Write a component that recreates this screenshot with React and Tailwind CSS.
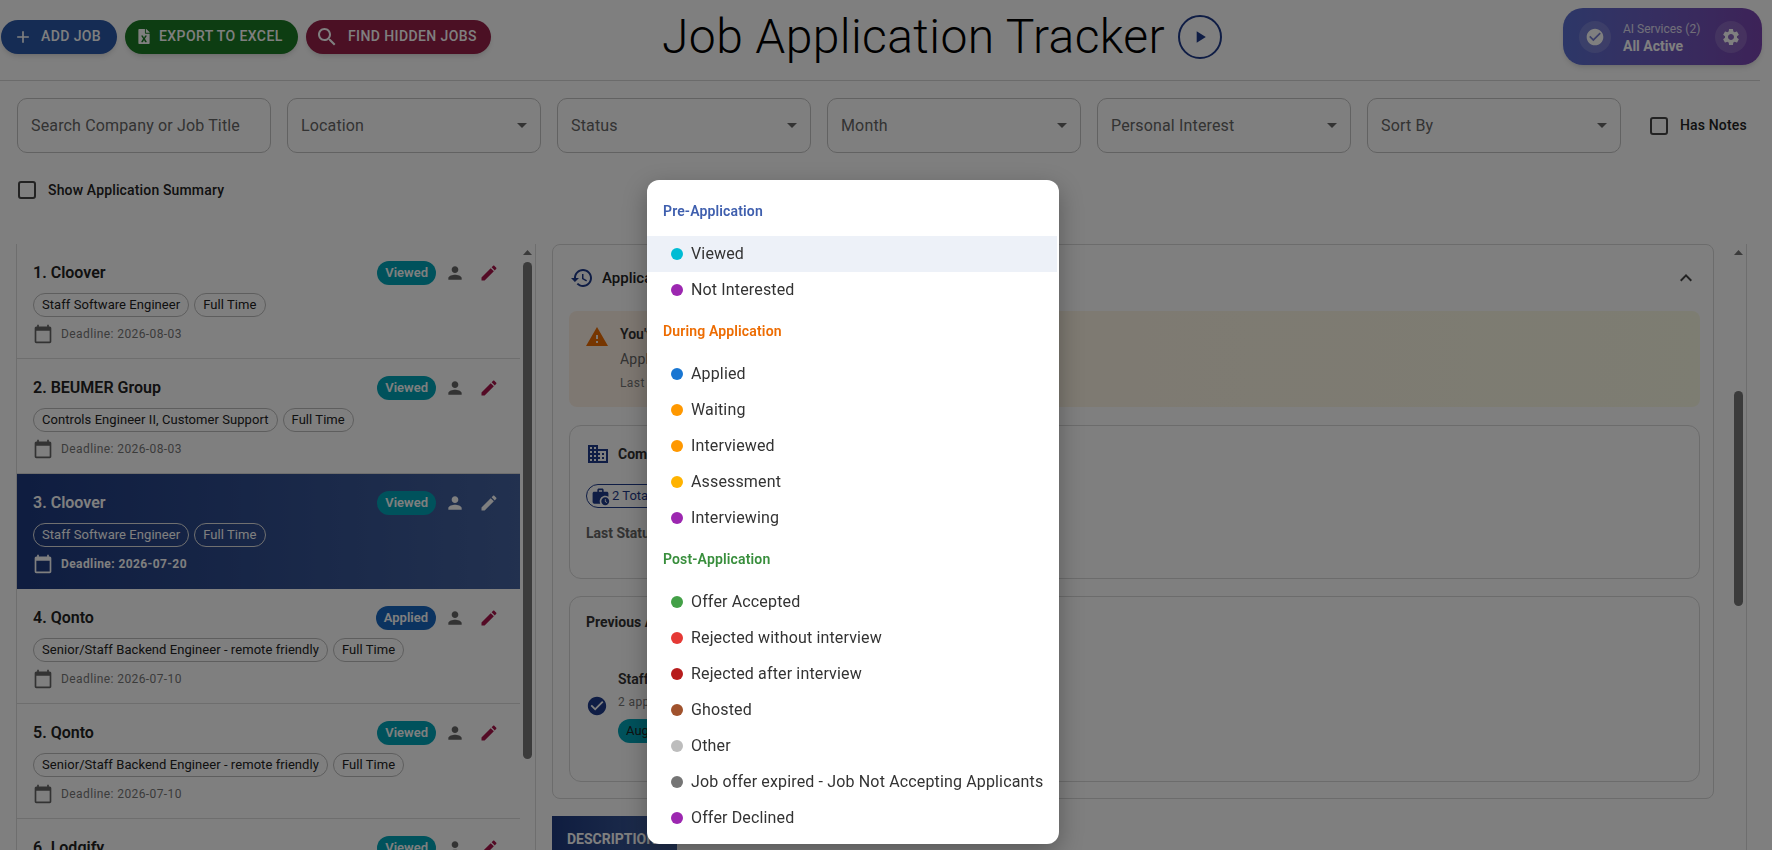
import React from "react";
import { FaFileExcel } from "react-icons/fa";

const P = {
  person: "M12 12c2.21 0 4-1.79 4-4s-1.79-4-4-4-4 1.79-4 4 1.79 4 4 4zm0 2c-2.67 0-8 1.34-8 4v2h16v-2c0-2.66-5.33-4-8-4z",
  edit: "M3 17.25V21h3.75L17.81 9.94l-3.75-3.75L3 17.25zM20.71 7.04c.39-.39.39-1.02 0-1.41l-2.34-2.34c-.39-.39-1.02-.39-1.41 0l-1.83 1.83 3.75 3.75 1.83-1.83z",
  cal: "M20 3h-1V1h-2v2H7V1H5v2H4c-1.1 0-2 .9-2 2v16c0 1.1.9 2 2 2h16c1.1 0 2-.9 2-2V5c0-1.1-.9-2-2-2zm0 18H4V8h16v13z",
  add: "M19 13h-6v6h-2v-6H5v-2h6V5h2v6h6v2z",
  search: "M15.5 14h-.79l-.28-.27C15.41 12.59 16 11.11 16 9.5 16 5.91 13.09 3 9.5 3S3 5.91 3 9.5 5.91 16 9.5 16c1.61 0 3.09-.59 4.23-1.57l.27.28v.79l5 4.99L20.49 19l-4.99-5zm-6 0C7.01 14 5 11.99 5 9.5S7.01 5 9.5 5 14 7.01 14 9.5 11.99 14 9.5 14z",
  check: "M12 2C6.48 2 2 6.48 2 12s4.48 10 10 10 10-4.48 10-10S17.52 2 12 2zm-2 15l-5-5 1.41-1.41L10 14.17l7.59-7.59L19 8l-9 9z",
  gear: "M19.14 12.94c.04-.3.06-.61.06-.94 0-.32-.02-.64-.07-.94l2.03-1.58c.18-.14.23-.41.12-.61l-1.92-3.32c-.12-.22-.37-.29-.59-.22l-2.39.96c-.5-.38-1.03-.7-1.62-.94l-.36-2.54c-.04-.24-.24-.41-.48-.41h-3.84c-.24 0-.43.17-.47.41l-.36 2.54c-.59.24-1.13.57-1.62.94l-2.39-.96c-.22-.08-.47 0-.59.22L2.74 8.87c-.12.21-.08.47.12.61l2.03 1.58c-.05.3-.09.63-.09.94s.02.64.07.94l-2.03 1.58c-.18.14-.23.41-.12.61l1.92 3.32c.12.22.37.29.59.22l2.39-.96c.5.38 1.03.7 1.62.94l.36 2.54c.05.24.24.41.48.41h3.84c.24 0 .44-.17.47-.41l.36-2.54c.59-.24 1.13-.56 1.62-.94l2.39.96c.22.08.47 0 .59-.22l1.92-3.32c.12-.22.07-.47-.12-.61l-2.01-1.58zM12 15.6c-1.98 0-3.6-1.62-3.6-3.6s1.62-3.6 3.6-3.6 3.6 1.62 3.6 3.6-1.62 3.6-3.6 3.6z",
  history: "M13 3c-4.97 0-9 4.03-9 9H1l3.89 3.89.07.14L9 12H6c0-3.87 3.13-7 7-7s7 3.13 7 7-3.13 7-7 7c-1.93 0-3.68-.79-4.94-2.06l-1.42 1.42C8.27 19.99 10.51 21 13 21c4.97 0 9-4.03 9-9s-4.03-9-9-9zm-1 5v5l4.28 2.54.72-1.21-3.5-2.08V8H12z",
  warn: "M1 21h22L12 2 1 21zm12-3h-2v-2h2v2zm0-4h-2v-4h2v4z",
  domain: "M12 7V3H2v18h20V7H10zM6 19H4v-2h2v2zm0-4H4v-2h2v2zm0-4H4V9h2v2zm0-4H4V5h2v2zm4 12H8v-2h2v2zm0-4H8v-2h2v2zm0-4H8V9h2v2zm0-4H8V5h2v2zm10 12h-8v-2h2v-2h-2v-2h2v-2h-2V9h8v10zm-2-8h-2v2h2v-2zm0 4h-2v2h2v-2z",
  work: "M18 11c1.49 0 2.87.47 4 1.26V8c0-1.11-.89-2-2-2h-4V4c0-1.11-.89-2-2-2h-4c-1.11 0-2 .89-2 2v2H4c-1.11 0-1.99.89-1.99 2L2 19c0 1.11.89 2 2 2h7.68c-.43-.91-.68-1.92-.68-3 0-3.87 3.13-7 7-7zm-8-7h4v2h-4V4zM18 13c-2.76 0-5 2.24-5 5s2.24 5 5 5 5-2.24 5-5-2.24-5-5-5zm1.65 7.35L17.5 18.2V15h1v2.79l1.85 1.85-.7.71z",
  less: "M12 8l-6 6 1.41 1.41L12 10.83l4.59 4.58L18 14z",
  play: "M8 5v14l11-7z",
};

function Icon({ d, className }) {
  return (
    <svg viewBox="0 0 24 24" className={className} fill="currentColor" aria-hidden="true">
      <path d={d} />
    </svg>
  );
}

function Field({ label, arrow = true }) {
  return (
    <div className="w-[254px] h-[55px] shrink-0 border border-[#c4c4c4] rounded-[10px] px-[13px] flex items-center justify-between text-[#666] text-[16px] tracking-[0.15px]">
      <span>{label}</span>
      {arrow && (
        <svg viewBox="0 0 10 5" className="w-[10px] h-[5px] text-[#666]" fill="currentColor" aria-hidden="true">
          <path d="M0 0l5 5 5-5z" />
        </svg>
      )}
    </div>
  );
}

function Box() {
  return <span className="w-[18px] h-[18px] shrink-0 border-2 border-[#444] rounded-[3px]" />;
}

function Scroll({ gap, thumb }) {
  return (
    <div className="w-4 shrink-0 flex flex-col items-center pt-[6px] border-r border-[#dcdcdc]">
      <svg viewBox="0 0 9 5" className="w-[9px] h-[5px] text-[#777]" fill="currentColor" aria-hidden="true">
        <path d="M0 5l4.5-5 4.5 5z" />
      </svg>
      <div className={`w-[9px] rounded-[5px] bg-[#777] ${gap} ${thumb}`} />
    </div>
  );
}

const jobs = [
  { n: "1. Cloover", s: "Viewed", t: "Staff Software Engineer", d: "2026-08-03" },
  { n: "2. BEUMER Group", s: "Viewed", t: "Controls Engineer II, Customer Support", d: "2026-08-03" },
  { n: "3. Cloover", s: "Viewed", t: "Staff Software Engineer", d: "2026-07-20", sel: true },
  { n: "4. Qonto", s: "Applied", t: "Senior/Staff Backend Engineer - remote friendly", d: "2026-07-10" },
  { n: "5. Qonto", s: "Viewed", t: "Senior/Staff Backend Engineer - remote friendly", d: "2026-07-10" },
  { n: "6. Lodgify", s: "Viewed", t: "Senior Software Engineer", d: "2026-07-10" },
];

function JobRow({ job }) {
  const sel = job.sel;
  const chip = `h-6 px-2 rounded-full border flex items-center text-[13px] tracking-[0.06px] ${sel ? "border-[#e0e0e0] text-white" : "border-[#bdbdbd] text-[#222]"}`;
  return (
    <div className={`h-[115px] shrink-0 pl-4 pr-[16px] pt-[17px] ${sel ? "bg-gradient-to-r from-[#1e3a80] to-[#44629f]" : "border-b border-[#dcdcdc]"}`}>
      <div className="flex items-center h-6">
        <span className={`flex-1 text-[16px] font-semibold ${sel ? "text-white" : "text-[#222]"}`}>{job.n}</span>
        <span className={`h-6 px-2 rounded-full flex items-center text-[13px] font-semibold text-white ${job.s === "Viewed" ? "bg-[#00a5b8]" : "bg-[#1767c0]"}`}>{job.s}</span>
        <span className="w-[38px] flex justify-center">
          <Icon d={P.person} className={`w-5 h-5 ${sel ? "text-white" : "text-[#666]"}`} />
        </span>
        <span className="w-[30px] flex justify-center">
          <Icon d={P.edit} className={`w-5 h-5 ${sel ? "text-white" : "text-[#a8144a]"}`} />
        </span>
      </div>
      <div className="flex gap-[5px] mt-[8px]">
        <span className={chip}>{job.t}</span>
        <span className={chip}>Full Time</span>
      </div>
      <div className="flex items-center mt-[6px] h-[22px]">
        <Icon d={P.cal} className={`w-5 h-5 ${sel ? "text-white" : "text-[#666]"}`} />
        <span className={`ml-[8px] text-[12px] tracking-[0.4px] ${sel ? "text-white font-bold" : "text-[#777]"}`}>Deadline: {job.d}</span>
      </div>
    </div>
  );
}

const groups = [
  { h: "Pre-Application", c: "text-[#3f5fae]", items: [["Viewed", "bg-[#00bcd4]"], ["Not Interested", "bg-[#9c27b0]"]] },
  { h: "During Application", c: "text-[#ed6c02]", items: [["Applied", "bg-[#1976d2]"], ["Waiting", "bg-[#ff9800]"], ["Interviewed", "bg-[#ff9800]"], ["Assessment", "bg-[#ffb300]"], ["Interviewing", "bg-[#9c27b0]"]] },
  { h: "Post-Application", c: "text-[#388e3c]", items: [["Offer Accepted", "bg-[#43a047]"], ["Rejected without interview", "bg-[#e53935]"], ["Rejected after interview", "bg-[#b71c1c]"], ["Ghosted", "bg-[#a0522d]"], ["Other", "bg-[#bdbdbd]"], ["Job offer expired - Job Not Accepting Applicants", "bg-[#757575]"], ["Offer Declined", "bg-[#9c27b0]"]] },
];

function Menu() {
  return (
    <div className="fixed left-[647px] top-[180px] w-[412px] z-20 bg-white rounded-[12px] py-2 shadow-[0_8px_24px_rgba(0,0,0,0.3)] overflow-hidden">
      {groups.map((g) => (
        <div key={g.h}>
          <div className={`h-12 pl-4 pb-[2px] flex items-center text-[14px] tracking-[0.15px] font-semibold ${g.c}`}>{g.h}</div>
          {g.items.map(([t, c]) => (
            <div key={t} className={`h-9 mr-[2px] pl-6 flex items-center text-[16px] tracking-[0.15px] text-[#333] ${t === "Viewed" ? "bg-[#edf1f8]" : ""}`}>
              <span className={`w-3 h-3 rounded-full mr-2 ${c}`} />
              {t}
            </div>
          ))}
        </div>
      ))}
    </div>
  );
}

export default function App() {
  return (
    <div className="relative h-screen w-full overflow-hidden bg-white flex flex-col font-['Roboto',sans-serif]">
      <header className="h-[81px] shrink-0 mr-[12px] border-b border-[#d6d6d6] flex items-center pl-px pb-[7px]">
        <div className="flex gap-2">
          <button className="h-[34px] w-[116px] rounded-full bg-[#2a58a8] text-white text-[14px] font-medium tracking-[0.4px] flex items-center pl-[12px] gap-[8px] shadow-md">
            <Icon d={P.add} className="w-5 h-5" />ADD JOB
          </button>
          <button className="h-[34px] w-[173px] rounded-full bg-[#1b7a24] text-white text-[14px] font-medium tracking-[0.4px] flex items-center pl-[13px] gap-[9px] shadow-md">
            <FaFileExcel className="w-[12px] h-[15px]" />EXPORT TO EXCEL
          </button>
          <button className="h-[34px] w-[185px] rounded-full bg-[#962048] text-white text-[14px] font-medium tracking-[0.4px] flex items-center pl-[9px] gap-[9px] shadow-md">
            <Icon d={P.search} className="w-6 h-6" />FIND HIDDEN JOBS
          </button>
        </div>
        <div className="ml-[171px] flex items-center gap-[13px]">
          <h1 className="text-[48px] leading-none font-light tracking-[0.4px] text-black whitespace-nowrap">Job Application Tracker</h1>
          <span className="w-[44px] h-[44px] rounded-full border-2 border-[#1e3a8a] flex items-center justify-center text-[#1e3a8a]">
            <Icon d={P.play} className="w-5 h-5" />
          </span>
        </div>
        <div className="ml-auto -mr-[2px] w-[199px] h-[57px] rounded-[20px] bg-gradient-to-r from-[#5a6fd0] to-[#7a45b0] flex items-center pl-4 pr-[15px] shadow-md">
          <span className="w-8 h-8 rounded-full bg-white/15 flex items-center justify-center">
            <Icon d={P.check} className="w-5 h-5 text-white" />
          </span>
          <div className="ml-3 flex-1 text-white pt-[4px]">
            <div className="text-[12px] leading-[16px] opacity-80">AI Services (2)</div>
            <div className="text-[14px] leading-[19px] font-bold">All Active</div>
          </div>
          <span className="w-8 h-8 rounded-full bg-white/15 flex items-center justify-center">
            <Icon d={P.gear} className="w-5 h-5 text-white" />
          </span>
        </div>
      </header>

      <div className="flex items-center gap-4 pl-[17px] mt-[17px] shrink-0">
        <Field label="Search Company or Job Title" arrow={false} />
        <Field label="Location" />
        <Field label="Status" />
        <Field label="Month" />
        <Field label="Personal Interest" />
        <Field label="Sort By" />
        <div className="flex items-center ml-[13px] gap-3">
          <Box />
          <span className="text-[14px] font-medium tracking-[0.15px] text-[#222]">Has Notes</span>
        </div>
      </div>

      <div className="flex items-center gap-3 pl-[18px] mt-[28px] h-[18px] shrink-0">
        <Box />
        <span className="text-[14px] font-medium tracking-[0.15px] text-[#222]">Show Application Summary</span>
      </div>

      <main className="flex flex-1 min-h-0 mt-[45px] pl-[16px] pr-[25px]">
        <div className="flex shrink-0">
          <div className="w-[504px] border-l border-[#dcdcdc] flex flex-col overflow-hidden">
            {jobs.map((j) => (
              <JobRow key={j.n} job={j} />
            ))}
          </div>
          <Scroll gap="mt-[7px]" thumb="h-[497px]" />
        </div>

        <div className="ml-4 flex-1 min-w-0 flex overflow-hidden">
          <div className="flex-1 min-w-0">
            <section className="h-[555px] border border-[#d8d8d8] rounded-[8px] pl-4 pr-[13px]">
              <div className="h-[66px] flex items-center">
                <Icon d={P.history} className="w-6 h-6 text-[#1e3a8a] ml-[1px]" />
                <span className="ml-[8px] text-[15px] font-medium text-[#222]">Application History</span>
                <Icon d={P.less} className="w-6 h-6 ml-auto mr-[2px] text-[#444]" />
              </div>
              <div className="h-[96px] rounded-[8px] bg-gradient-to-r from-[#fdf0e4] to-[#fbfae4] flex pl-4 pt-[14px]">
                <Icon d={P.warn} className="w-6 h-6 text-[#ed6c02]" />
                <div className="ml-[11px]">
                  <div className="text-[14px] font-semibold text-[#333] leading-[18px]">You've applied here before</div>
                  <div className="text-[14px] text-[#666] leading-[18px] mt-[7px] tracking-[0.2px]">Application on file</div>
                  <div className="text-[12px] text-[#777] leading-[16px] mt-[7px] tracking-[0.4px]">Last update on record</div>
                </div>
              </div>
              <div className="h-[154px] mt-[18px] rounded-[12px] border border-[#d8d8d8] pl-4 pt-4">
                <div className="flex items-center gap-2">
                  <Icon d={P.domain} className="w-6 h-6 text-[#1e3a8a]" />
                  <span className="text-[14px] font-bold text-[#333]">Company History</span>
                </div>
                <span className="mt-[18px] inline-flex items-center h-6 pl-1 pr-2 rounded-full border border-[#1e3a8a] text-[#1e3a8a] text-[13px] gap-[2px]">
                  <Icon d={P.work} className="w-[19px] h-[19px]" />2 Total Applications
                </span>
                <div className="mt-[10px] text-[14px] font-bold text-[#666]">Last Status</div>
              </div>
              <div className="h-[186px] mt-[17px] rounded-[12px] border border-[#d8d8d8] pl-4 pt-[15px]">
                <div className="text-[14px] font-bold text-[#333]">Previous Applications</div>
                <div className="flex items-center mt-[36px]">
                  <Icon d={P.check} className="w-[22px] h-[22px] text-[#1e3a8a]" />
                  <div className="ml-[10px]">
                    <div className="text-[14px] font-semibold text-[#333]">Staff Software Engineer</div>
                    <div className="text-[12px] text-[#777] tracking-[0.4px] mt-[3px]">2 applications</div>
                    <span className="mt-[8px] inline-flex h-6 px-2 items-center rounded-full bg-[#00a5b8] text-[13px] text-[#222]">August 2026</span>
                  </div>
                </div>
              </div>
            </section>
            <div className="mt-[17px] w-[125px] h-[40px] bg-gradient-to-r from-[#1e3a80] to-[#44629f] text-white text-[14px] font-bold pl-[15px] pt-[13px]">DESCRIPTION</div>
          </div>
          <div className="ml-[17px] flex">
            <Scroll gap="mt-[136px]" thumb="h-[215px]" />
          </div>
        </div>
      </main>

      <div className="fixed inset-0 z-10 bg-black/50 backdrop-blur-[0.6px]" />
      <Menu />
    </div>
  );
}
